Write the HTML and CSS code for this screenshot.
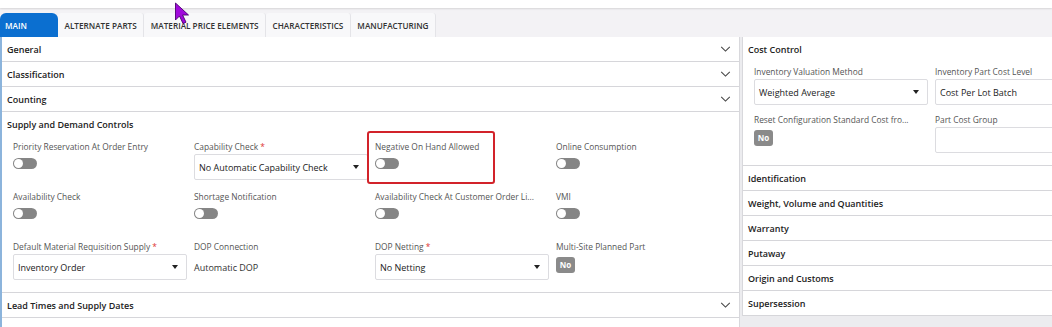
FILE: index.html
```html
<!DOCTYPE html>
<html>
<head>
<meta charset="utf-8">
<link rel="stylesheet" href="styles.css">
</head>
<body>
<div class="topbar"></div>
<div class="tabbar">
  <div class="tab active">MAIN</div>
  <div class="tab">ALTERNATE PARTS</div>
  <div class="tab">MATERIAL PRICE ELEMENTS</div>
  <div class="tab">CHARACTERISTICS</div>
  <div class="tab">MANUFACTURING</div>
</div>
<div class="content">
  <div class="left">
    <div class="sec-head"><span>General</span><svg class="chev" viewBox="0 0 12 7"><path d="M1 1 L6 6 L11 1" fill="none" stroke="#444" stroke-width="1.2"/></svg></div>
    <div class="sec-head"><span>Classification</span><svg class="chev" viewBox="0 0 12 7"><path d="M1 1 L6 6 L11 1" fill="none" stroke="#444" stroke-width="1.2"/></svg></div>
    <div class="sec-head"><span>Counting</span><svg class="chev" viewBox="0 0 12 7"><path d="M1 1 L6 6 L11 1" fill="none" stroke="#444" stroke-width="1.2"/></svg></div>
    <div class="sec-open">
      <div class="sec-title">Supply and Demand Controls</div>
      <div class="grid">
        <div class="field"><div class="label">Priority Reservation At Order Entry</div><div class="toggle"></div></div>
        <div class="field"><div class="label">Capability Check <span class="req">*</span></div><div class="select">No Automatic Capability Check<span class="caret"></span></div></div>
        <div class="field"><div class="highlight"></div><div class="label">Negative On Hand Allowed</div><div class="toggle"></div></div>
        <div class="field"><div class="label">Online Consumption</div><div class="toggle"></div></div>
        <div class="field"><div class="label">Availability Check</div><div class="toggle"></div></div>
        <div class="field"><div class="label">Shortage Notification</div><div class="toggle"></div></div>
        <div class="field"><div class="label">Availability Check At Customer Order Li...</div><div class="toggle"></div></div>
        <div class="field"><div class="label">VMI</div><div class="toggle"></div></div>
        <div class="field"><div class="label">Default Material Requisition Supply <span class="req">*</span></div><div class="select">Inventory Order<span class="caret"></span></div></div>
        <div class="field"><div class="label">DOP Connection</div><div class="value">Automatic DOP</div></div>
        <div class="field"><div class="label">DOP Netting <span class="req">*</span></div><div class="select">No Netting<span class="caret"></span></div></div>
        <div class="field"><div class="label">Multi-Site Planned Part</div><div class="badge-wrap"><span class="badge">No</span></div></div>
      </div>
    </div>
    <div class="sec-head"><span>Lead Times and Supply Dates</span><svg class="chev" viewBox="0 0 12 7"><path d="M1 1 L6 6 L11 1" fill="none" stroke="#444" stroke-width="1.2"/></svg></div>
    <div class="sec-head"><span>Site/Weight</span></div>
  </div>
  <div class="right">
    <div class="sec-open">
      <div class="sec-title">Cost Control</div>
      <div class="grid rgrid">
        <div class="field"><div class="label">Inventory Valuation Method</div><div class="select">Weighted Average<span class="caret"></span></div></div>
        <div class="field"><div class="label">Inventory Part Cost Level</div><div class="select wide">Cost Per Lot Batch</div></div>
        <div class="field"><div class="label">Reset Configuration Standard Cost fro...</div><div class="badge-wrap"><span class="badge">No</span></div></div>
        <div class="field"><div class="label">Part Cost Group</div><div class="select wide"></div></div>
      </div>
    </div>
    <div class="sec-head"><span>Identification</span></div>
    <div class="sec-head"><span>Weight, Volume and Quantities</span></div>
    <div class="sec-head"><span>Warranty</span></div>
    <div class="sec-head"><span>Putaway</span></div>
    <div class="sec-head"><span>Origin and Customs</span></div>
    <div class="sec-head"><span>Supersession</span></div>
  </div>
</div>
<svg class="cursor" viewBox="0 0 17 23" width="17" height="23"><path d="M1.5 1 L1.5 18 L5.5 14 L9 21.5 L12 20.2 L8.6 13 L14.5 13 Z" fill="#a10adc" stroke="#4b0070" stroke-width="0.9" stroke-linejoin="round"/></svg>
</body>
</html>
```

FILE: styles.css
```css
* { box-sizing: border-box; }
body {
  margin: 0;
  width: 1052px;
  height: 327px;
  overflow: hidden;
  background: #ececef;
  font-family: "Open Sans", "Noto Sans", sans-serif;
  color: #222;
  position: relative;
}
.topbar {
  height: 8px;
  background: #fff;
  box-shadow: 0 1px 2px rgba(0,0,0,0.12);
  position: relative;
  z-index: 1;
}
.tabbar {
  height: 29px;
  background: #f3f2f5;
  display: flex;
  align-items: flex-end;
}
.tab {
  height: 24px;
  padding: 0 6.5px;
  display: flex;
  align-items: center;
  font-size: 8.2px;
  font-weight: 600;
  color: #333;
  background: #f8f8fa;
  border-right: 1px solid #e4e4e8;
  border-radius: 3px 3px 0 0;
}
.tab.active {
  width: 58px;
  background: #0b6fd0;
  color: #fff;
  border-radius: 6px 6px 0 0;
  padding-left: 5px;
  border-right: none;
}
.content {
  display: flex;
  gap: 2px;
  align-items: flex-start;
}
.left {
  width: 740px;
  background: #fff;
  border-left: 2px solid #8cb4dc;
  border-right: 1px solid #d8d8dc;
}
.right {
  flex: 1;
  background: #fff;
  border-left: 1px solid #d8d8dc;
  overflow: hidden;
  min-width: 0;
}
.sec-head {
  height: 25px;
  border-bottom: 1px solid #d6d6da;
  display: flex;
  align-items: center;
  justify-content: space-between;
  padding: 0 8px 0 5px;
  font-size: 9px;
  font-weight: 600;
  color: #222;
}
.chev { width: 11px; height: 6px; }
.sec-open {
  border-bottom: 1px solid #d6d6da;
  padding-bottom: 12px;
}
.sec-title {
  height: 25px;
  display: flex;
  align-items: center;
  padding-left: 5px;
  font-size: 9px;
  font-weight: 600;
}
.grid {
  display: grid;
  grid-template-columns: repeat(4, 181px);
  grid-auto-rows: 39px;
  row-gap: 11px;
  padding: 4px 0 0 11px;
}
.rgrid {
  grid-template-columns: 181px 181px;
  row-gap: 9px;
  width: 400px;
}
.field { position: relative; }
.label {
  height: 13px;
  line-height: 12px;
  font-size: 8.4px;
  color: #555;
  white-space: nowrap;
}
.req { color: #d33; }
.toggle {
  width: 24px;
  height: 11px;
  margin-top: 4px;
  background: #858585;
  border-radius: 6px;
  position: relative;
}
.toggle::after {
  content: "";
  position: absolute;
  left: 1px;
  top: 1px;
  width: 9px;
  height: 9px;
  border-radius: 50%;
  background: #fff;
}
.select {
  width: 174px;
  height: 26px;
  border: 1px solid #dcdce0;
  border-radius: 2px;
  display: flex;
  align-items: center;
  justify-content: space-between;
  padding: 0 8px 0 4px;
  font-size: 9px;
  color: #222;
  background: #fff;
  white-space: nowrap;
}
.select.wide { width: 200px; }
.caret {
  width: 0;
  height: 0;
  border-left: 3.5px solid transparent;
  border-right: 3.5px solid transparent;
  border-top: 4px solid #222;
}
.value {
  height: 26px;
  display: flex;
  align-items: center;
  font-size: 9px;
  color: #333;
}
.badge-wrap {
  display: flex;
  padding-top: 3px;
}
.badge {
  display: block;
  background: #8a8a8a;
  color: #fff;
  font-size: 8px;
  font-weight: 700;
  width: 19px;
  height: 16px;
  line-height: 16px;
  text-align: center;
  border-radius: 3px;
}
.highlight {
  position: absolute;
  left: -8px;
  top: -10px;
  width: 128px;
  height: 53px;
  border: 2px solid #d2232a;
  border-radius: 3px;
}
.cursor {
  position: absolute;
  left: 174px;
  top: 2px;
  z-index: 5;
}
```
